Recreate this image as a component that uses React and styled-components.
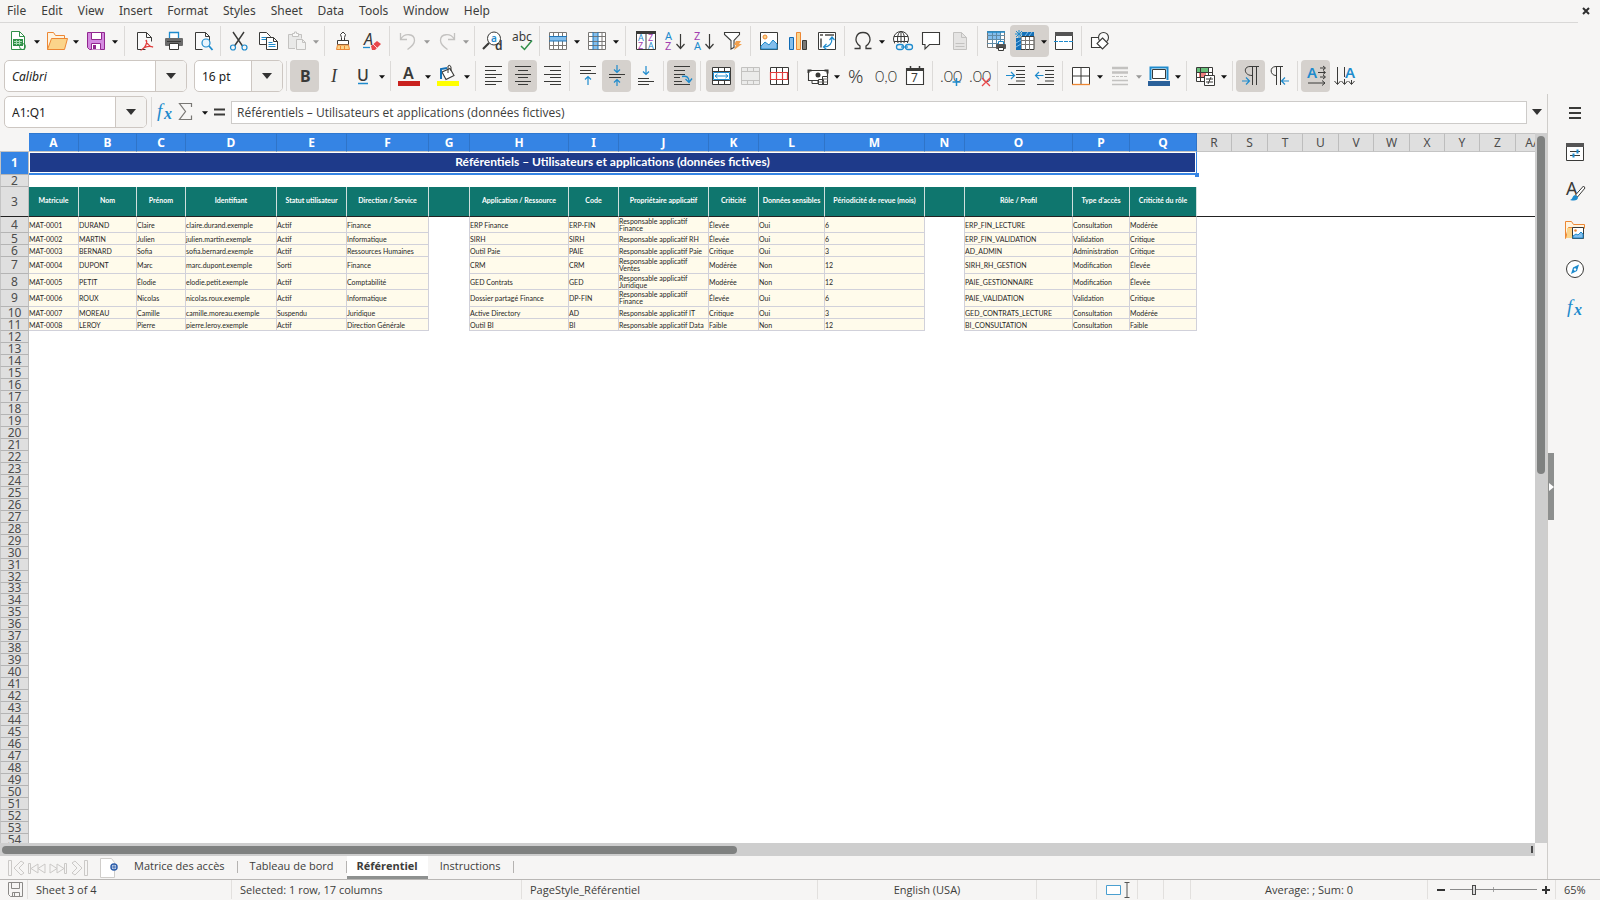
import React, { useState } from "react";
import styled, { createGlobalStyle } from "styled-components";

const GlobalStyle = createGlobalStyle`
    * {
        box-sizing: border-box;
    }

    body {
        margin: 0;
        overflow: hidden;
        background: #f6f5f4;
    }

    body, button, input {
        font-family: "Noto Sans", "Open Sans", sans-serif;
        font-size: 12px;
        color: #3d3d3b;
    }
`;

const Window = styled.div`
    display: flex;
    flex-direction: column;
    height: 100vh;
    background: #f6f5f4;
`;

const MenuBar = styled.nav`
    display: flex;
    align-items: center;
    height: 23px;
    margin-right: 22px;
    padding-left: 7px;
    gap: 15px;
    border-bottom: 1px solid #d9d8d7;

    a {
        color: inherit;
        text-decoration: none;
        line-height: 16px;
    }
`;

const MenuRow = styled.header`
    position: relative;
`;

const CloseButton = styled.button`
    position: absolute;
    right: 8px;
    top: 5px;
    display: flex;
    padding: 0;
    border: 0;
    background: none;
`;

const Toolbar = styled.div`
    display: flex;
    align-items: center;
    height: ${(props) => (props.$format ? 36 : 35)}px;
    padding-left: ${(props) => (props.$format ? 4 : 3)}px;
`;

const Separator = styled.span`
    width: 1px;
    height: 30px;
    margin: 0 ${(props) => (props.$wide ? "5px 0 4px" : "3px")};
    background: #dcdad8;
`;

const ToolButton = styled.button`
    display: flex;
    align-items: center;
    justify-content: center;
    width: ${(props) => (props.$menu ? 39 : 29)}px;
    height: 32px;
    padding: 0;
    border: 0;
    border-radius: 4px;
    background: ${(props) => (props.$on ? "#d5d1cd" : "none")};
    opacity: ${(props) => (props.disabled ? 0.4 : 1)};
`;

const IconSvg = styled.svg`
    flex: none;
    overflow: visible;
`;

const Combo = styled.div`
    display: flex;
    width: ${(props) => props.$width}px;
    height: 32px;
    margin-right: ${(props) => props.$gap || 0}px;
    border: 1px solid #cdc7c2;
    border-radius: 5px;
    background: #fff;
    overflow: hidden;

    input {
        flex: 1;
        min-width: 0;
        padding: 0 7px;
        border: 0;
        background: none;
        color: #222;
        font-style: ${(props) => (props.$italic ? "italic" : "normal")};
        outline: 0;
    }

    button {
        display: flex;
        align-items: center;
        justify-content: center;
        width: 31px;
        padding: 0;
        border: 0;
        border-left: 1px solid #cdc7c2;
        background: #f4f3f1;
    }
`;

const Workspace = styled.div`
    display: flex;
    flex: 1;
    min-height: 0;
`;

const Main = styled.main`
    display: flex;
    flex-direction: column;
    flex: 1;
    min-width: 0;
    border-right: 1px solid #cfcdca;
`;

const FormulaBar = styled.div`
    display: flex;
    align-items: center;
    height: 39px;
    padding: 0 0 3px 4px;
`;

const FormulaInput = styled.input`
    flex: 1;
    min-width: 0;
    height: 23px;
    padding: 0 5px;
    border: 1px solid #cdcbc9;
    background: #fff;
    font-family: "Open Sans", sans-serif;
    outline: 0;
`;

const SmallButton = styled.button`
    display: flex;
    align-items: center;
    justify-content: center;
    width: ${(props) => props.$width || 20}px;
    height: 24px;
    padding: 0;
    border: 0;
    background: none;
`;

const SheetArea = styled.div`
    display: flex;
    flex: 1;
    min-height: 0;
`;

const Viewport = styled.div`
    flex: 1;
    min-width: 0;
    overflow: hidden;
    background: #fff;
`;

const Grid = styled.table`
    table-layout: fixed;
    width: 0;
    border-collapse: separate;
    border-spacing: 0;
    font-family: Lato, "Liberation Sans", sans-serif;
    font-size: 7px;
    line-height: 8px;

    th, td {
        padding: 0;
    }
`;

const Corner = styled.td`
    height: 19px;
    background: #f6f5f4;
    border-bottom: 1px solid #c4c4c4;
`;

const ColumnHead = styled.th`
    height: 19px;
    overflow: hidden;
    font-family: "Noto Sans", sans-serif;
    font-size: 12px;
    line-height: 16px;
    font-weight: ${(props) => (props.$on ? 700 : 400)};
    color: ${(props) => (props.$on ? "#fff" : "#4c4c4c")};
    background: ${(props) => (props.$on ? "#3584e4" : "#dfdfdf")};
    border-top: 1px solid ${(props) => (props.$on ? "#2f78d0" : "#c4c4c4")};
    border-right: 1px solid ${(props) => (props.$on ? "#2f74c8" : "#bdbdbd")};
    border-bottom: 1px solid #c4c4c4;
`;

const RowHead = styled.th`
    font-family: "Noto Sans", sans-serif;
    font-size: 12px;
    line-height: 10px;
    font-weight: ${(props) => (props.$on ? 700 : 400)};
    color: ${(props) => (props.$on ? "#fff" : "#4c4c4c")};
    background: ${(props) => (props.$on ? "#3584e4" : "#dfdfdf")};
    border-left: 1px solid #c4c4c4;
    border-right: 1px solid #bdbdbd;
    border-bottom: 1px solid ${(props) => (props.$frozen ? "#222" : "#b4b4b4")};
`;

const TitleCell = styled.td`
    position: relative;
    background: #1e3a8a;
    color: #fff;
    font-size: 12px;
    line-height: 20px;
    font-weight: 700;
    text-align: center;
    vertical-align: top;
    border-right: 1px solid #3584e4;
    border-bottom: 2px solid #3584e4;
    box-shadow: inset 0 0 0 1px #fff;
`;

const FillHandle = styled.span`
    position: absolute;
    right: -3px;
    bottom: -4px;
    width: 4px;
    height: 4px;
    background: #3584e4;
`;

const HeadCell = styled.th`
    background: #0f766e;
    color: #fff;
    white-space: nowrap;
    border-right: 1px solid #cfdfdd;
    border-bottom: 1px solid #222;

    && {
        padding-bottom: 4px;
    }
`;

const Cell = styled.td`
    color: #262626;
    background: #fffbeb;
    white-space: ${(props) => (props.$wrap ? "pre-line" : "nowrap")};
    line-height: ${(props) => (props.$wrap ? 7 : 8)}px;
    border-right: 1px solid #d1d1da;
    border-bottom: 1px solid #d1d1da;
`;

const GapCell = styled.td`
    border-right: 1px solid #d1d1da;
`;

const EmptyCell = styled.td`
    border-bottom: ${(props) => (props.$frozen ? "1px solid #222" : "0")};
`;

const VScroll = styled.div`
    width: 12px;
    padding: 3px 2px;
    background: #cecece;
`;

const HScroll = styled.div`
    display: flex;
    justify-content: space-between;
    height: 13px;
    margin-right: 12px;
    padding: 3px 2px;
    background: #cecece;
`;

const Thumb = styled.div`
    width: ${(props) => (props.$vertical ? "100%" : "48%")};
    height: ${(props) => (props.$vertical ? "48%" : "8px")};
    border-radius: 4px;
    background: #7f8180;
`;

const SplitMark = styled.div`
    width: 2px;
    background: #4a4a4a;
`;

const TabBar = styled.div`
    display: flex;
    height: 23px;
    padding-left: 7px;
`;

const TabTools = styled.div`
    display: flex;
    align-items: center;
    gap: 11px;
    margin-right: 4px;
`;

const Tab = styled.button`
    display: flex;
    align-items: center;
    padding: ${(props) => (props.$on ? "0 10px" : "0 12px")};
    border: 0;
    border-bottom: 3px solid ${(props) => (props.$on ? "#8e9190" : "transparent")};
    background: ${(props) => (props.$on ? "#fff" : "none")};
    font-family: "Open Sans", "Noto Sans", sans-serif;
    font-size: 11px;
    font-weight: ${(props) => (props.$on ? 700 : 400)};
    line-height: 16px;
`;

const TabMark = styled.span`
    width: 1px;
    height: 12px;
    margin-top: 5px;
    background: #b5b3b1;
`;

const Splitter = styled.div`
    display: flex;
    align-items: center;
    width: 6px;

    button {
        display: flex;
        align-items: center;
        width: 6px;
        height: 67px;
        padding: 0;
        border: 0;
        background: #8d8f8e;
    }
`;

const Sidebar = styled.aside`
    display: flex;
    flex-direction: column;
    align-items: center;
    gap: 15px;
    width: 46px;
    padding: 7px 4px 0 0;
`;

const StatusBar = styled.footer`
    display: grid;
    grid-template-columns: 28px 204fr 290fr 296fr 219fr 60px 41px 26px 27px 237fr 128px 44px;
    height: 21px;
    padding-bottom: 1px;
    border-top: 1px solid #b9b7b5;
    font-family: "Open Sans", "Noto Sans", sans-serif;
    font-size: 11px;
`;

const StatusItem = styled.div`
    display: flex;
    align-items: center;
    justify-content: ${(props) => (props.$center ? "center" : "flex-start")};
    padding-left: ${(props) => (props.$center ? 0 : 8)}px;
    border-right: 1px solid #e2e0de;
    line-height: 16px;
    white-space: nowrap;

    &:last-child {
        border-right: 0;
    }
`;

const ZoomButton = styled.button`
    display: flex;
    padding: 0;
    border: 0;
    background: none;
`;

const ZoomSlider = styled.input`
    appearance: none;
    flex: 1;
    min-width: 0;
    height: 12px;
    margin: 0 4px;
    background:
        linear-gradient(#8a8a8a, #8a8a8a) center / 100% 1px no-repeat,
        linear-gradient(#a5a5a5, #a5a5a5) center / 1px 5px no-repeat;

    &::-webkit-slider-thumb {
        appearance: none;
        width: 4px;
        height: 10px;
        border: 1px solid #4a4a4a;
        background: #dcdcdc;
    }
`;

const D = "#3a3a38";
const B = "#1e8bcd";
const LB = "#83beec";
const G = "#797774";

const sans = "Noto Sans, sans-serif";
const line = (d, stroke = D, width = 1, fill = "none") => (
    <path d={d} stroke={stroke} strokeWidth={width} fill={fill} />
);

const icons = {
    newDoc: <>
        {line("M5.5 2.5h8l5 5v13h-13z", "#309048", 1, "#fff")}
        {line("M13.5 2.5v5h5", "#309048")}
        <rect x="7" y="10" width="10" height="7" fill="#309048" />
        {line("M8 12.5h8M8 14.5h8M10.5 11v5M13.5 11v5", "#a5dbb2")}
        <circle cx="16.5" cy="17.5" r="3" fill="none" stroke="#309048" />
    </>,
    open: <>
        {line("M2.5 20.5v-17h6l2 3h9v4", "#ed8733", 1, "#fff4e0")}
        {line("M2.5 20.5l4-11h16l-3 11z", "#ed8733", 1, "#fbd48a")}
    </>,
    save: <>
        {line("M3.5 3.5h17v17h-15l-2-2z", "#92278f", 1, "#d48ae0")}
        {line("M7.5 3.5h10v7h-10z", "#92278f", 1, "#fff")}
        {line("M7.5 20.5v-6h9v6", "#92278f", 1, "#fff")}
        <rect x="9" y="16" width="3" height="4" fill="#92278f" />
    </>,
    pdf: <>
        {line("M12.5 20.5h-8v-17h9l5 5v4", D, 1, "#fafafa")}
        {line("M13.5 3.5v5h5")}
        {line("M13 11c2 2-1 8-4 9.5c2-3 8-4 11-2.5c-3 0-7-4-7-7", "#e03c3c", 1.3)}
    </>,
    print: <>
        <rect x="3" y="9" width="18" height="8" rx="1" fill="#6b6b6b" />
        {line("M7.5 9v-5.5h9v5.5", B, 1.3, "#fff")}
        {line("M5 12.5h14", D, 1)}
        {line("M7.5 14.5h9v6h-9z", D, 1, "#fff")}
    </>,
    preview: <>
        {line("M11.5 20.5h-7v-17h10l4 4v6", D, 1, "#fafafa")}
        {line("M14.5 3.5v4h4")}
        <circle cx="15" cy="14" r="4" fill="#e8f4fd" stroke={B} strokeWidth="1.2" />
        {line("M18 17l3.5 4", B, 1.8)}
    </>,
    cut: <>
        {line("M6 3l9.5 14M17 3l-9.5 14", D, 1.4)}
        <circle cx="6" cy="18.5" r="2.5" fill="none" stroke={B} strokeWidth="1.2" />
        <circle cx="17.5" cy="18.5" r="2.5" fill="none" stroke={B} strokeWidth="1.2" />
    </>,
    copy: <>
        {line("M3.5 3.5h7l4 4v8h-11z", D, 1, "#fff")}
        {line("M5.5 8.5h5M5.5 10.5h5", B)}
        {line("M10.5 8.5h7l4 4v8h-11z", D, 1, "#fff")}
        {line("M17.5 8.5v4h4")}
        {line("M12.5 13.5h4M12.5 15.5h7M12.5 17.5h7", B)}
    </>,
    paste: <>
        {line("M10 19.5h-6.5v-14h13v4", G, 1, "#d8d8d8")}
        {line("M7.5 7.5v-3h2v-1.5h2v1.5h2v3z", G, 1, "#fff")}
        {line("M11.5 10.5h6l3 3v7h-9z", G, 1, "#eee")}
        {line("M17.5 10.5v3h3", G)}
    </>,
    brush: <>
        {line("M10.5 11.5v-3l-1-3l2.5-2.5l2.5 2.5l-1 3v3", D, 1, "#fff")}
        {line("M6.5 11.5h11v4h-11z", D, 1, "#fff")}
        {line("M6.5 16l-1 4.5h13l-1-4.5z", "#ed8733", 1, "#fbd48a")}
        {line("M9.5 20v-3M13.5 20v-3", "#ed8733")}
    </>,
    clear: <>
        <text x="4" y="16" fontFamily={sans} fontSize="16" fontStyle="italic" fill={D}>A</text>
        {line("M3 18.5h7", B, 1.3)}
        <path d="M11 17l6-5l4 3l-6 6h-3z" fill="#e8474b" />
        {line("M13 15l4 4", "#fff", 0.8)}
    </>,
    undo: line("M4.5 4v6.5h6.5M4.5 10.5c4-7 14-6 14 1c0 4-3 6-7 9", G, 1.3),
    redo: line("M19.5 4v6.5h-6.5M19.5 10.5c-4-7-14-6-14 1c0 4 3 6 7 9", G, 1.3),
    find: <>
        <circle cx="13" cy="9.5" r="6.5" fill="#fff" stroke={D} />
        <text x="10" y="13" fontFamily={sans} fontSize="10" fontWeight="600" fill={B}>a</text>
        {line("M8 14l-6 6", D, 2.2)}
        <text x="14" y="21" fontFamily={sans} fontSize="12" fontWeight="600" fill={D}>d</text>
    </>,
    spell: <>
        <text x="2" y="12" fontFamily={sans} fontSize="12" fill={D}>abc</text>
        {line("M11 17l3.5 3.5l7.5-9", "#309048", 1.5)}
    </>,
    rows: <>
        <rect x="3" y="3" width="18" height="18" fill="#fff" />
        <rect x="3" y="7" width="18" height="5" fill={LB} />
        {line("M3.5 3.5h17v17h-17zM7.5 3v4M12.5 3v4M16.5 3v4M7.5 12v8M12.5 12v8M16.5 12v8M3 16.5h18", G)}
        {line("M3 7.5h18M3 12h18", "#2176b8")}
    </>,
    cols: <>
        <rect x="3" y="3" width="18" height="18" fill="#fff" />
        <rect x="8" y="3" width="5" height="18" fill={LB} />
        {line("M3.5 3.5h17v17h-17zM3 7.5h18M3 12.5h18M3 16.5h18M17 3v17", G)}
        {line("M8 3v18M13 3v18", "#2176b8")}
    </>,
    sort: <>
        {line("M2.5 3.5h19v17h-19z", D, 1, "#fff")}
        {line("M2 3.5h20", D, 3)}
        {line("M12 4v17", D)}
        <text x="4" y="12" fontFamily={sans} fontSize="9" fill={B}>A</text>
        <text x="4" y="20" fontFamily={sans} fontSize="9" fill="#a33fb0">Z</text>
        <text x="14" y="12" fontFamily={sans} fontSize="9" fill="#a33fb0">Z</text>
        <text x="14" y="20" fontFamily={sans} fontSize="9" fill={B}>A</text>
    </>,
    sortAsc: <>
        <text x="2" y="11" fontFamily={sans} fontSize="11" fill={B}>A</text>
        <text x="2" y="21" fontFamily={sans} fontSize="11" fill="#a33fb0">Z</text>
        {line("M17.5 5v14M13.5 15l4 4.5l4-4.5", D, 1.2)}
    </>,
    sortDesc: <>
        <text x="2" y="11" fontFamily={sans} fontSize="11" fill="#a33fb0">Z</text>
        <text x="2" y="21" fontFamily={sans} fontSize="11" fill={B}>A</text>
        {line("M17.5 5v14M13.5 15l4 4.5l4-4.5", D, 1.2)}
    </>,
    filter: <>
        {line("M3.5 3.5h15v2l-5.5 6v7l-3 1.5v-8.5l-6.5-6z", D, 1.1, "#fff")}
        <path d="M15 12h5l-2 3h3l-8 6l2-5h-2z" fill="#f2a04e" />
    </>,
    image: <>
        {line("M3.5 3.5h17v17h-17z", D, 1, "#fff")}
        <circle cx="8" cy="8" r="2" fill="#fbd48a" stroke="#ed8733" />
        <path d="M4 20v-3l4-4l4 3l4-5l4 4v5z" fill={LB} stroke={B} />
    </>,
    chart: <>
        {line("M3.5 8.5h4v12h-4z", "#0f6ab4", 1, LB)}
        {line("M10.5 3.5h4v17h-4z", "#ed8733", 1, "#fbd48a")}
        {line("M16.5 11.5h4v9h-4z", D, 1, G)}
    </>,
    pivot: <>
        {line("M3.5 3.5h17v17h-17z", D, 1, "#fff")}
        {line("M5 6h3M10 6h9M6 9.5v9", G, 2)}
        {line("M9 18c6 0 8-3 8-9M14.5 11l2.5-3l2.5 3M11.5 15l-3 3l3 2.5", B, 1.2)}
    </>,
    omega: line("M3.5 19.5h5.5v-2.5c-7-5-4-13.5 3-13.5s10 8.5 3 13.5v2.5h5.5", D, 1.3),
    link: <>
        <circle cx="11" cy="10" r="7.5" fill="#fff" stroke={D} />
        <ellipse cx="11" cy="10" rx="3.5" ry="7.5" fill="none" stroke={D} />
        {line("M4 7.5h14M4 12.5h14M11 3v14")}
        <rect x="5" y="14" width="19" height="8" fill="#f6f5f4" />
        <rect x="6.5" y="15.5" width="7" height="5" rx="2.5" fill="none" stroke={B} strokeWidth="1.3" />
        <rect x="15.5" y="15.5" width="7" height="5" rx="2.5" fill="none" stroke={B} strokeWidth="1.3" />
        {line("M11 18h7", B, 1.2)}
    </>,
    comment: line("M3.5 3.5h17v12h-10l-4.5 4.5v-4.5h-2.5z", D, 1.1, "#fff"),
    header: <>
        {line("M5.5 3.5h8l5 5v12h-13z", G, 1, "#ccc")}
        {line("M13.5 3.5v5h5M7.5 14.5h9M7.5 17.5h9", G)}
    </>,
    printArea: <>
        {line("M3.5 2.5h17v16h-17z", G, 1, "#fff")}
        <rect x="4" y="3" width="12" height="8" fill={LB} />
        {line("M3 6.5h18M3 10.5h18M3 14.5h18M8.5 3v15M12.5 3v15M16.5 3v15", "#5f8ba6")}
        {line("M3 3h18", B, 1.5)}
        <rect x="12" y="15" width="10" height="5" rx="1" fill="#555" />
        {line("M14.5 15v-2.5h5v2.5", B, 1, "#fff")}
        {line("M14.5 18.5h5v3h-5z", D, 1, "#fff")}
    </>,
    freeze: <>
        {line("M8 7.5h13v13h-13z", D, 1, "#fff")}
        {line("M8 11.5h13M8 15.5h13M12.5 8v13M16.5 8v13", G)}
        <rect x="9" y="3" width="12" height="4" fill="#1471b8" />
        <rect x="3" y="9" width="5" height="12" fill="#1471b8" />
        {line("M12 7l3-4M16 7l3-4M3 14l5-3M3 18l5-3", LB)}
        {line("M6 1v8M2 5h8M3 2l6 6M9 2l-6 6", B)}
    </>,
    split: <>
        {line("M3.5 3.5h17v17h-17z", D, 1, "#fff")}
        <rect x="3" y="3" width="18" height="4" fill="#555" />
        <path d="M2 12.5h20" stroke={B} strokeDasharray="4 1" />
    </>,
    shapes: <>
        {line("M3.5 8.5h11v10h-11z", D, 1.1, "#fff")}
        <circle cx="15.5" cy="8.5" r="5" fill="#fafafa" stroke={D} strokeWidth="1.1" />
        {line("M14.5 9l5.5 5.5l-5.5 5.5l-5.5-5.5z", D, 1.1, "#fff")}
    </>,
    bold: <text x="7" y="18" fontFamily={sans} fontSize="16" fontWeight="700" fill={D}>B</text>,
    italic: <text x="9" y="18" fontFamily="Liberation Serif, serif" fontSize="18" fontStyle="italic" fill={D}>I</text>,
    underline: <>
        <text x="6" y="17" fontFamily={sans} fontSize="16" fontWeight="500" fill={D}>U</text>
        {line("M7 19.5h10", B, 1.5)}
    </>,
    fontColor: <>
        <text x="6" y="15" fontFamily={sans} fontSize="16" fontWeight="600" fill={D}>A</text>
        <rect x="1" y="17" width="22" height="5" fill="#c9211e" />
    </>,
    highlight: <>
        {line("M6 8l8 -3.5l4 7l-8 4z", D, 1.1, "#fff")}
        {line("M12 9v-7q2-2 3 1v4", D)}
        {line("M5 15V5l6-1", "#1471b8", 2)}
        <rect x="1" y="17" width="22" height="5" fill="#ffff00" />
    </>,
    left: line("M3 2.5h17M3 6.5h11M3 10.5h17M3 13.5h11M3 17.5h17M3 20.5h11", D),
    center: line("M4 2.5h16M7 6.5h10M4 10.5h16M7 13.5h10M4 17.5h16M7 20.5h10", D),
    right: line("M4 2.5h17M10 6.5h11M4 10.5h17M10 13.5h11M4 17.5h17M10 20.5h11", D),
    top: <>
        {line("M4 2.5h16M4 6.5h11M4 9.5h16")}
        {line("M12 21v-8M9 15.5l3-3l3 3", B, 1.2)}
    </>,
    middle: <>
        {line("M4 10.5h16M4 13.5h12")}
        {line("M12 1v7M9 5.5l3 3l3-3M12 22v-6M9 18.5l3-3l3 3", B, 1.2)}
    </>,
    bottom: <>
        {line("M4 14.5h11M4 17.5h16M4 20.5h11")}
        {line("M12 2v8M9 7.5l3 3l3-3", B, 1.2)}
    </>,
    wrap: <>
        {line("M4 2.5h16M4 6.5h11M4 10.5h11M4 13.5h6M4 17.5h8M4 20.5h16")}
        {line("M12 12.5c5-1 7 1 7 5M15.5 15l3.5 3.5l3-4", B, 1.3)}
    </>,
    merge: <>
        {line("M3.5 3.5h18v17h-18zM3 7.5h18M3 16.5h18M9.5 3v4M15.5 3v4M9.5 17v4M15.5 17v4", D, 1, "#fff")}
        {line("M4.5 8.5h16v7h-16z", B, 1, "#fff")}
        {line("M6 12h13M8.5 10l-2.5 2l2.5 2M16.5 10l2.5 2l-2.5 2", B)}
    </>,
    unmerge: line("M3.5 3.5h18v17h-18zM3 7.5h18M3 16.5h18M9.5 3v4M15.5 3v4M9.5 17v4M15.5 17v4", G, 1, "#ddd"),
    splitCell: <>
        {line("M3.5 3.5h18v17h-18zM9.5 3v18M15.5 3v18", D, 1, "#fff")}
        {line("M3.5 8.5h17v7h-17zM9.5 8v8M15.5 8v8", "#e03c3c", 1.2, "#fff")}
    </>,
    currency: <>
        {line("M2.5 6.5h19v10h-19z", D, 1.1, "#fff")}
        {line("M2.5 9v-2.5h3M18.5 6.5h3v3", D, 2)}
        <circle cx="12" cy="11" r="2.5" fill={D} />
        {line("M6 16.5h6v3h-6zM12.5 15.5h5v5h-5zM16.5 12.5h5v8h-5z", D, 1, "#fff")}
        {line("M13 18h8M17 15h5", G)}
    </>,
    percent: <text x="3" y="19" fontFamily={sans} fontSize="19" fontWeight="300" fill={D}>%</text>,
    number: <text x="1" y="18" fontFamily="Lato, sans-serif" fontSize="16" fontWeight="300" fill={D}>0,0</text>,
    date: <>
        {line("M3.5 4.5h17v16h-17z", D, 1.1, "#fff")}
        {line("M3 5.5h18", D, 3)}
        {line("M7.5 2v3M16.5 2v3", D, 1.5)}
        <text x="8" y="18" fontFamily={sans} fontSize="12" fill={D}>7</text>
    </>,
    addDec: <>
        <text x="1" y="18" fontFamily="Lato, sans-serif" fontSize="16" fontWeight="300" fill={D}>.00</text>
        {line("M17.5 14v8M13.5 18h8", B, 1.5)}
    </>,
    delDec: <>
        <text x="1" y="18" fontFamily="Lato, sans-serif" fontSize="16" fontWeight="300" fill={D}>.00</text>
        {line("M14 14l8 8M22 14l-8 8", "#e8474b", 1.3)}
    </>,
    indent: <>
        {line("M4 2.5h17M12 6.5h9M12 10.5h9M12 13.5h9M4 20.5h17M12 17h9")}
        {line("M2 11.5h8M7 8l3.5 3.5l-3.5 3.5", B, 1.2)}
    </>,
    outdent: <>
        {line("M4 2.5h17M12 6.5h9M12 10.5h9M12 13.5h9M4 20.5h17M12 17h9")}
        {line("M2.5 11.5h8M6 8l-3.5 3.5l3.5 3.5", B, 1.2)}
    </>,
    borders: <>
        {line("M3.5 20v-16.5h17v16.5M12 3v17M3 12h18", D, 1, "#fff")}
        {line("M3 20.5h18", "#ed8733", 1.3)}
    </>,
    lineStyle: <>
        {line("M4 4h16M4 8.5h16", G, 2.5)}
        {line("M4 16.5h16M4 20.5h16", G, 1.5)}
        <path d="M4 12.5h16" stroke={G} strokeDasharray="3 1" />
    </>,
    lineColor: <>
        {line("M3.5 16v-12.5h17v12.5", B, 2, "#fff")}
        {line("M5.5 5.5h13v9h-13z", D, 1)}
        <rect x="1" y="17" width="22" height="5" fill="#2a6099" />
    </>,
    conditional: <>
        {line("M3.5 3.5h16v14h-16z", D, 1, "#fff")}
        <rect x="4" y="4" width="11" height="4" fill="#68c07b" />
        <rect x="6" y="9" width="7" height="4" fill="#f08080" />
        {line("M3 8.5h16M3 13.5h16M7.5 3v14M15.5 3v14", D)}
        {line("M11.5 11.5h10v10h-10z", D, 1, "#fff")}
        {line("M13 15h7M13 18h7M18 13l-3 7", D)}
    </>,
    ltr: <>
        {line("M20 2.5h-9c-7 0-6 9 2 9M13.5 3v18M17.5 3v18")}
        {line("M3 17h7M7 13.5l3.5 3.5l-3.5 3.5", B, 1.2)}
    </>,
    rtl: <>
        {line("M15 2.5h-7c-7 0-6 9 0 9M8.5 3v18M12.5 3v18")}
        {line("M14 17h7M17 13.5l-3.5 3.5l3.5 3.5", B, 1.2)}
    </>,
    horizontal: <>
        <text x="3" y="14" fontFamily={sans} fontSize="15" fontWeight="600" fill={B}>A</text>
        {line("M16 4h5M19 2l2.5 2l-2.5 2M14 8.5h7M19 6.5l2.5 2l-2.5 2M16 13h5M19 11l2.5 2l-2.5 2M4 19h17M18 16.5l3 2.5l-3 2.5", D)}
    </>,
    vertical: <>
        <text x="12" y="14" fontFamily={sans} fontSize="15" fontWeight="600" fill={B}>A</text>
        {line("M4.5 3v17M1.5 17l3 3.5l3-3.5M11.5 3v10M11.5 15v5M8.5 17l3 3.5l3-3.5M18.5 16v4M15.5 17l3 3.5l3-3.5", D)}
    </>,
    fx: <>
        <text x="4" y="17" fontFamily="Liberation Serif, serif" fontSize="19" fontStyle="italic" fill={B}>f</text>
        <text x="11" y="19" fontFamily="Liberation Serif, serif" fontSize="16" fontStyle="italic" fontWeight="700" fill={B}>x</text>
    </>,
    sigma: line("M17.5 7v-3.5h-12l6 8l-6 8h12v-4", G, 1.2),
    equal: line("M7 9.5h11M7 14.5h11", D, 2),
    menu: line("M6 7h12M6 12h12M6 17h12", D, 2),
    properties: <>
        {line("M3.5 3.5h17v17h-17z", D, 1, "#fff")}
        <rect x="3" y="3" width="18" height="4" fill="#555" />
        {line("M7 11.5h10M7 15.5h10", D)}
        {line("M14.5 9.5v4M10.5 13.5v4", B, 2)}
    </>,
    styles: <>
        <text x="3" y="16" fontFamily={sans} fontSize="18" fill={D}>A</text>
        {line("M20.5 7l-8 9l2 2l7.5-9z", D, 1, "#fff")}
        <path d="M7 21c3-1 2-4 5-5l3 2c0 4-4 4-8 3z" fill={B} />
    </>,
    gallery: <>
        {line("M2.5 20.5v-17h6l2 3h11v4", "#ed8733", 1, "#fff4e0")}
        {line("M2.5 20.5l3-11h16", "#ed8733", 1, "#fbd48a")}
        <rect x="4" y="10" width="8" height="10" fill="#fbd48a" />
        {line("M9.5 9.5h11v11h-11z", D, 1, "#fff")}
        <circle cx="12.5" cy="12.5" r="1.3" fill="#ed8733" />
        <path d="M10 20v-2l3-2l2 1l3-3l2 2v4z" fill={LB} stroke={B} />
    </>,
    navigator: <>
        <circle cx="12" cy="12" r="8.5" fill="#fff" stroke={D} />
        <path d="M16 7.5l-2 6.5l-6 3l2-6.5z" fill={B} />
        <circle cx="12" cy="12.5" r="1.2" fill="#fff" />
    </>,
};

function Icon({ name }) {
    return (
        <IconSvg width="24" height="24" viewBox="0 0 24 24" fill="none" aria-hidden="true">{icons[name]}</IconSvg>
    );
}

const ArrowSvg = styled.svg`
    flex: none;
    width: ${(props) => (props.$big ? 10 : 6)}px;
    height: ${(props) => (props.$big ? 6 : 4)}px;
    margin: ${(props) => (props.$big ? "0" : "2px 0 0 4px")};
`;

function Arrow({ big }) {
    return (
        <ArrowSvg $big={big} viewBox="0 0 10 6" aria-hidden="true">
            <path d="M0 0h10L5 6z" fill={big ? "#333" : "#111"} />
        </ArrowSvg>
    );
}

// "|" = separator, "||" = wide separator, [icon, label, flags] = button
// flags: m = drop-down arrow, x = disabled, o = pressed
const standardBar = [
    ["newDoc", "New", "m"], ["open", "Open", "m"], ["save", "Save", "m"], "||",
    ["pdf", "Export as PDF"], ["print", "Print"], ["preview", "Print Preview"], "|",
    ["cut", "Cut"], ["copy", "Copy"], ["paste", "Paste", "mx"], "|",
    ["brush", "Clone Formatting"], ["clear", "Clear Formatting"], "|",
    ["undo", "Undo", "mx"], ["redo", "Redo", "mx"], "|",
    ["find", "Find and Replace"], ["spell", "Spelling"], "|",
    ["rows", "Row", "m"], ["cols", "Column", "m"], "||",
    ["sort", "Sort"], ["sortAsc", "Sort Ascending"], ["sortDesc", "Sort Descending"], ["filter", "AutoFilter"], "|",
    ["image", "Insert Image"], ["chart", "Insert Chart"], ["pivot", "Pivot Table"], "|",
    ["omega", "Special Character", "m"], ["link", "Hyperlink"], ["comment", "Comment"], ["header", "Headers and Footers", "x"], "|",
    ["printArea", "Print Area"], ["freeze", "Freeze Rows and Columns", "mo"], ["split", "Split Window"], "|",
    ["shapes", "Show Draw Functions"],
];

const formattingBar = [
    "|", ["bold", "Bold", "o"], ["italic", "Italic"], ["underline", "Underline", "m"], "|",
    ["fontColor", "Font Color", "m"], ["highlight", "Background Color", "m"], "|",
    ["left", "Align Left"], ["center", "Center Horizontally", "o"], ["right", "Align Right"], "|",
    ["top", "Align Top"], ["middle", "Center Vertically", "o"], ["bottom", "Align Bottom"], "|",
    ["wrap", "Wrap Text", "o"], "||",
    ["merge", "Merge and Center", "o"], ["unmerge", "Merge Cells", "x"], ["splitCell", "Unmerge Cells"], "||",
    ["currency", "Currency", "m"], ["percent", "Percent"], ["number", "Number"], ["date", "Date"], "|",
    ["addDec", "Add Decimal Place"], ["delDec", "Delete Decimal Place"], "|",
    ["indent", "Increase Indent"], ["outdent", "Decrease Indent"], "|",
    ["borders", "Borders", "m"], ["lineStyle", "Border Style", "mx"], ["lineColor", "Border Color", "m"], "|",
    ["conditional", "Conditional", "m"], "|",
    ["ltr", "Left-To-Right", "o"], ["rtl", "Right-To-Left"], "|",
    ["horizontal", "Text direction left to right", "o"], ["vertical", "Text direction top to bottom"],
];

function ToolItems({ items }) {
    return items.map((item, i) => {
        if (typeof item === "string") {
            return <Separator key={i} $wide={item === "||"} />;
        }
        const [icon, label, flags = ""] = item;
        return (
            <ToolButton key={i} aria-label={label} $menu={flags.includes("m")} $on={flags.includes("o")} disabled={flags.includes("x")}>
                <Icon name={icon} />
                {flags.includes("m") && <Arrow />}
            </ToolButton>
        );
    });
}

const menus = ["File", "Edit", "View", "Insert", "Format", "Styles", "Sheet", "Data", "Tools", "Window", "Help"];
const tabs = ["Matrice des accès", "Tableau de bord", "Référentiel", "Instructions"];
const title = "Référentiels – Utilisateurs et applications (données fictives)";

const columns = [
    ["A", 50], ["B", 58], ["C", 49], ["D", 91], ["E", 70], ["F", 82], ["G", 41], ["H", 99], ["I", 50],
    ["J", 90], ["K", 50], ["L", 66], ["M", 100], ["N", 40], ["O", 108], ["P", 57], ["Q", 67],
    ["R", 35], ["S", 36], ["T", 35], ["U", 36], ["V", 35], ["W", 36], ["X", 35], ["Y", 35], ["Z", 36], ["AA", 35],
];
const usedColumns = 17;
// rows not listed are 12px high
const rowHeights = { 1: 23, 3: 30, 4: 16, 7: 17, 8: 16, 9: 17, 33: 11 };
const rowCount = 54;

const headings = [
    "Matricule", "Nom", "Prénom", "Identifiant", "Statut utilisateur", "Direction / Service", "",
    "Application / Ressource", "Code", "Propriétaire applicatif", "Criticité", "Données sensibles", "Périodicité de revue (mois)", "",
    "Rôle / Profil", "Type d'accès", "Criticité du rôle",
];

const records = [
    ["MAT-0001", "DURAND", "Claire", "claire.durand.exemple", "Actif", "Finance", null, "ERP Finance", "ERP-FIN", "Responsable applicatif\nFinance", "Élevée", "Oui", "6", null, "ERP_FIN_LECTURE", "Consultation", "Modérée"],
    ["MAT-0002", "MARTIN", "Julien", "julien.martin.exemple", "Actif", "Informatique", null, "SIRH", "SIRH", "Responsable applicatif RH", "Élevée", "Oui", "6", null, "ERP_FIN_VALIDATION", "Validation", "Critique"],
    ["MAT-0003", "BERNARD", "Sofia", "sofia.bernard.exemple", "Actif", "Ressources Humaines", null, "Outil Paie", "PAIE", "Responsable applicatif Paie", "Critique", "Oui", "3", null, "AD_ADMIN", "Administration", "Critique"],
    ["MAT-0004", "DUPONT", "Marc", "marc.dupont.exemple", "Sorti", "Finance", null, "CRM", "CRM", "Responsable applicatif\nVentes", "Modérée", "Non", "12", null, "SIRH_RH_GESTION", "Modification", "Élevée"],
    ["MAT-0005", "PETIT", "Élodie", "elodie.petit.exemple", "Actif", "Comptabilité", null, "GED Contrats", "GED", "Responsable applicatif\nJuridique", "Modérée", "Non", "12", null, "PAIE_GESTIONNAIRE", "Modification", "Élevée"],
    ["MAT-0006", "ROUX", "Nicolas", "nicolas.roux.exemple", "Actif", "Informatique", null, "Dossier partagé Finance", "DP-FIN", "Responsable applicatif\nFinance", "Élevée", "Oui", "6", null, "PAIE_VALIDATION", "Validation", "Critique"],
    ["MAT-0007", "MOREAU", "Camille", "camille.moreau.exemple", "Suspendu", "Juridique", null, "Active Directory", "AD", "Responsable applicatif IT", "Critique", "Oui", "3", null, "GED_CONTRATS_LECTURE", "Consultation", "Modérée"],
    ["MAT-0008", "LEROY", "Pierre", "pierre.leroy.exemple", "Actif", "Direction Générale", null, "Outil BI", "BI", "Responsable applicatif Data", "Faible", "Non", "12", null, "BI_CONSULTATION", "Consultation", "Faible"],
];

function RowCells({ row }) {
    const rest = columns.length - usedColumns;
    if (row === 1) {
        return <>
            <TitleCell colSpan={usedColumns}>{title}<FillHandle /></TitleCell>
            <EmptyCell colSpan={rest} />
        </>;
    }
    if (row === 3) {
        return <>
            {headings.map((text, i) => <HeadCell key={i}>{text}</HeadCell>)}
            <EmptyCell $frozen colSpan={rest} />
        </>;
    }
    const record = records[row - 4];
    if (!record) {
        return <EmptyCell colSpan={columns.length} />;
    }
    return <>
        {record.map((text, i) => (
            text === null ? <GapCell key={i} /> : <Cell key={i} $wrap={text.includes("\n")}>{text}</Cell>
        ))}
        <EmptyCell colSpan={rest} />
    </>;
}

function Sheet() {
    return (
        <Grid>
            <colgroup>
                <col style={{ width: 29 }} />
                {columns.map(([name, width]) => <col key={name} style={{ width }} />)}
            </colgroup>
            <thead>
                <tr>
                    <Corner />
                    {columns.map(([name], i) => <ColumnHead key={name} $on={i < usedColumns}>{name}</ColumnHead>)}
                </tr>
            </thead>
            <tbody>
                {Array.from({ length: rowCount }, (_, i) => i + 1).map((row) => (
                    <tr key={row} style={{ height: rowHeights[row] || 12 }}>
                        <RowHead $on={row === 1} $frozen={row === 3}>{row}</RowHead>
                        <RowCells row={row} />
                    </tr>
                ))}
            </tbody>
        </Grid>
    );
}

function App() {
    const [activeTab, setActiveTab] = useState("Référentiel");
    const [zoom, setZoom] = useState(26);

    return (
        <Window>
            <GlobalStyle />
            <MenuRow>
                <MenuBar>
                    {menus.map((name) => <a key={name} href={`#${name}`}>{name}</a>)}
                </MenuBar>
                <CloseButton aria-label="Close">
                    <svg width="12" height="12" viewBox="0 0 12 12"><path d="M3 3l6 6M9 3l-6 6" stroke="#2e2e2e" strokeWidth="2" /></svg>
                </CloseButton>
            </MenuRow>
            <Toolbar>
                <ToolItems items={standardBar} />
            </Toolbar>
            <Toolbar $format>
                <Combo $width={183} $gap={7} $italic>
                    <input aria-label="Font Name" defaultValue="Calibri" />
                    <button aria-label="Font list"><Arrow big /></button>
                </Combo>
                <Combo $width={89}>
                    <input aria-label="Font Size" defaultValue="16 pt" />
                    <button aria-label="Size list"><Arrow big /></button>
                </Combo>
                <ToolItems items={formattingBar} />
            </Toolbar>
            <Workspace>
                <Main>
                    <FormulaBar>
                        <Combo $width={143} $gap={1}>
                            <input aria-label="Name Box" defaultValue="A1:Q1" />
                            <button aria-label="Ranges"><Arrow big /></button>
                        </Combo>
                        <Separator />
                        <SmallButton aria-label="Function Wizard"><Icon name="fx" /></SmallButton>
                        <SmallButton aria-label="Select Function" $width={32}><Icon name="sigma" /><Arrow /></SmallButton>
                        <SmallButton aria-label="Formula" $width={24}><Icon name="equal" /></SmallButton>
                        <FormulaInput aria-label="Input line" defaultValue={title} />
                        <SmallButton aria-label="Expand Formula Bar"><Arrow big /></SmallButton>
                    </FormulaBar>
                    <SheetArea>
                        <Viewport><Sheet /></Viewport>
                        <VScroll><Thumb $vertical /></VScroll>
                    </SheetArea>
                    <HScroll><Thumb /><SplitMark /></HScroll>
                    <TabBar>
                        <TabTools>
                            <svg width="82" height="20" viewBox="0 0 82 20" fill="#f6f5f4" stroke="#cbc9c7">
                                <path d="M1.5 2.5h3v15h-3zM14 3l-7 7l7 7l3-2l-5-5l5-5zM21.5 5.5v10h2v-10zM31 6l-7 4.5l7 4.5zM38 6l-7 4.5l7 4.5z" />
                                <path d="M43 6l7 4.5l-7 4.5zM50 6l7 4.5l-7 4.5zM57.5 5.5v10h2v-10zM68 3l7 7l-7 7l-3-2l5-5l-5-5zM77.5 2.5h3v15h-3z" />
                            </svg>
                            <ZoomButton aria-label="Add Sheet">
                                <svg width="18" height="20" viewBox="0 0 18 20">
                                    <path d="M.5.5h11l3 4v15H.5z" fill="#fff" stroke="#cfcdca" />
                                    <circle cx="14" cy="9" r="3" fill="#fff" stroke="#2a5caa" strokeWidth="1.5" />
                                    <path d="M14 7v4M12 9h4" stroke="#2a5caa" />
                                </svg>
                            </ZoomButton>
                        </TabTools>
                        {tabs.map((name) => (
                            <React.Fragment key={name}>
                                <Tab $on={name === activeTab} onClick={() => setActiveTab(name)}>{name}</Tab>
                                {name !== activeTab && <TabMark />}
                            </React.Fragment>
                        ))}
                    </TabBar>
                </Main>
                <Splitter>
                    <button aria-label="Hide sidebar">
                        <svg width="6" height="8" viewBox="0 0 6 8"><path d="M1 0l5 4l-5 4z" fill="#fff" /></svg>
                    </button>
                </Splitter>
                <Sidebar>
                    <SmallButton aria-label="Sidebar Settings" $width={24}><Icon name="menu" /></SmallButton>
                    <SmallButton aria-label="Properties" $width={24}><Icon name="properties" /></SmallButton>
                    <SmallButton aria-label="Styles" $width={24}><Icon name="styles" /></SmallButton>
                    <SmallButton aria-label="Gallery" $width={24}><Icon name="gallery" /></SmallButton>
                    <SmallButton aria-label="Navigator" $width={24}><Icon name="navigator" /></SmallButton>
                    <SmallButton aria-label="Functions" $width={24}><Icon name="fx" /></SmallButton>
                </Sidebar>
            </Workspace>
            <StatusBar>
                <StatusItem>
                    <svg width="15" height="15" viewBox="0 0 15 15" fill="none" stroke="#8b8987">
                        <path d="M.5.5h14v14h-12l-2-2zM3.5.5v6h8v-6M4.5 14.5v-4h7v4M6.5 11v3" />
                    </svg>
                </StatusItem>
                <StatusItem>Sheet 3 of 4</StatusItem>
                <StatusItem>Selected: 1 row, 17 columns</StatusItem>
                <StatusItem>PageStyle_Référentiel</StatusItem>
                <StatusItem $center>English (USA)</StatusItem>
                <StatusItem />
                <StatusItem>
                    <svg width="26" height="16" viewBox="0 0 26 16" fill="none">
                        <path d="M1.5 3.5h14v9h-14z" stroke="#4a9fd0" fill="#fff" />
                        <path d="M19.5.5h5M22 1v14M19.5 15.5h5" stroke="#555" />
                    </svg>
                </StatusItem>
                <StatusItem />
                <StatusItem />
                <StatusItem $center>Average: ; Sum: 0</StatusItem>
                <StatusItem>
                    <ZoomButton aria-label="Zoom out">
                        <svg width="10" height="10" viewBox="0 0 10 10"><path d="M1 5h8" stroke="#333" strokeWidth="2" /></svg>
                    </ZoomButton>
                    <ZoomSlider type="range" aria-label="Zoom" value={zoom} onChange={(event) => setZoom(event.target.value)} />
                    <ZoomButton aria-label="Zoom in">
                        <svg width="14" height="10" viewBox="0 0 14 10"><path d="M1 5h8M5 1v8" stroke="#333" strokeWidth="2" /></svg>
                    </ZoomButton>
                </StatusItem>
                <StatusItem>65%</StatusItem>
            </StatusBar>
        </Window>
    );
}

export default App;
